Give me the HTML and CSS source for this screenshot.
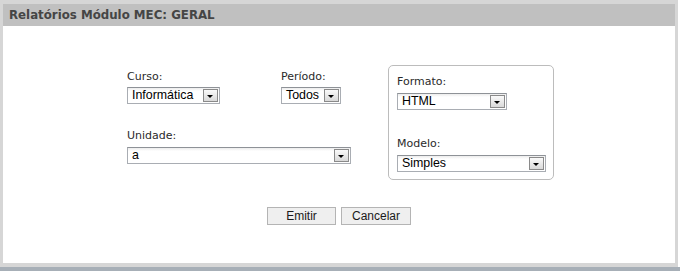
FILE: index.html
```html
<!DOCTYPE html>
<html lang="pt-BR">

<head>
    <meta charset="UTF-8">
    <title>Relatórios Módulo MEC</title>
    <link rel="stylesheet" href="styles.css">
</head>

<body>
    <div class="panel">
        <div class="panel-header">Relatórios Módulo MEC: GERAL</div>

        <div class="panel-body">
            <div class="filters">
                <div class="filter-grid">
                    <div class="field">
                        <label>Curso:</label>
                        <div class="select w-curso">
                            <span class="select-value">Informática</span>
                            <span class="select-btn"></span>
                        </div>
                    </div>
                    <div class="field">
                        <label>Período:</label>
                        <div class="select w-periodo">
                            <span class="select-value">Todos</span>
                            <span class="select-btn"></span>
                        </div>
                    </div>
                    <div class="field field-wide">
                        <label>Unidade:</label>
                        <div class="select w-unidade">
                            <span class="select-value">a</span>
                            <span class="select-btn"></span>
                        </div>
                    </div>
                </div>

                <div class="output-box">
                    <div class="field">
                        <label>Formato:</label>
                        <div class="select w-formato">
                            <span class="select-value">HTML</span>
                            <span class="select-btn"></span>
                        </div>
                    </div>
                    <div class="field field-modelo">
                        <label>Modelo:</label>
                        <div class="select w-modelo">
                            <span class="select-value">Simples</span>
                            <span class="select-btn"></span>
                        </div>
                    </div>
                </div>
            </div>

            <div class="actions">
                <button class="btn btn-emitir" type="button">Emitir</button>
                <button class="btn btn-cancelar" type="button">Cancelar</button>
            </div>
        </div>
    </div>
    <div class="footer-strip"></div>
</body>

</html>
```

FILE: styles.css
```css
* {
    margin: 0;
    padding: 0;
    box-sizing: border-box;
}

body {
    background: #ffffff;
    font-family: "DejaVu Sans", Verdana, sans-serif;
    width: 680px;
    height: 271px;
    overflow: hidden;
}

.panel {
    width: 678px;
    height: 267px;
    border: 3px solid #d6d6d6;
    border-top-width: 4px;
    border-bottom-width: 4px;
    background: #ffffff;
    display: flex;
    flex-direction: column;
}

.panel-header {
    background: #c0c0c0;
    height: 22px;
    line-height: 22px;
    padding-left: 6px;
    font-size: 11.8px;
    font-weight: bold;
    color: #454545;
}

.panel-body {
    flex: 1;
    padding-top: 39px;
}

.filters {
    display: flex;
    justify-content: center;
    align-items: flex-start;
    gap: 37px;
    padding-left: 3px;
}

.filter-grid {
    display: grid;
    grid-template-columns: 154px auto;
    row-gap: 25px;
    margin-top: 5px;
}

.field-wide {
    grid-column: 1 / 3;
}

.field label {
    display: block;
    font-size: 11px;
    line-height: 14px;
    color: #2a2a2a;
    margin-bottom: 3px;
}

.field-wide label {
    margin-bottom: 4px;
}

.output-box {
    width: 166px;
    border: 1px solid #bcbcbc;
    border-radius: 5px;
    padding: 9px 8px 7px 8px;
}

.output-box .field label {
    margin-bottom: 4px;
}

.field-modelo {
    margin-top: 27px;
}

.select {
    display: flex;
    align-items: center;
    height: 17px;
    border: 1px solid #a9adb3;
    border-top-color: #8e9297;
    background: linear-gradient(#ececec 0, #ffffff 3px);
    padding: 1px 1px 1px 4px;
}

.select-value {
    flex: 1;
    font-family: "Liberation Sans", Arial, sans-serif;
    font-size: 12.4px;
    line-height: 13px;
    color: #000000;
}

.select-btn {
    position: relative;
    width: 15px;
    height: 13px;
    border: 1px solid #8a8a8a;
    background: linear-gradient(#fafafa, #d9d9d9);
}

.select-btn::after {
    content: "";
    position: absolute;
    left: 3px;
    top: 5px;
    border-left: 3.5px solid transparent;
    border-right: 3.5px solid transparent;
    border-top: 3px solid #000000;
}

.w-curso {
    width: 93px;
}

.w-periodo {
    width: 60px;
}

.w-unidade {
    width: 224px;
}

.w-formato {
    width: 110px;
}

.w-modelo {
    width: 149px;
}

.actions {
    display: flex;
    justify-content: center;
    gap: 5px;
    margin-top: 27px;
}

.btn {
    height: 18px;
    border: 1px solid #b4b4b4;
    background: #efefef;
    font-family: "Liberation Sans", Arial, sans-serif;
    font-size: 12px;
    color: #1a1a1a;
}

.btn-emitir {
    width: 69px;
}

.btn-cancelar {
    width: 70px;
}

.footer-strip {
    height: 4px;
    background: #a7afb7;
}
```
